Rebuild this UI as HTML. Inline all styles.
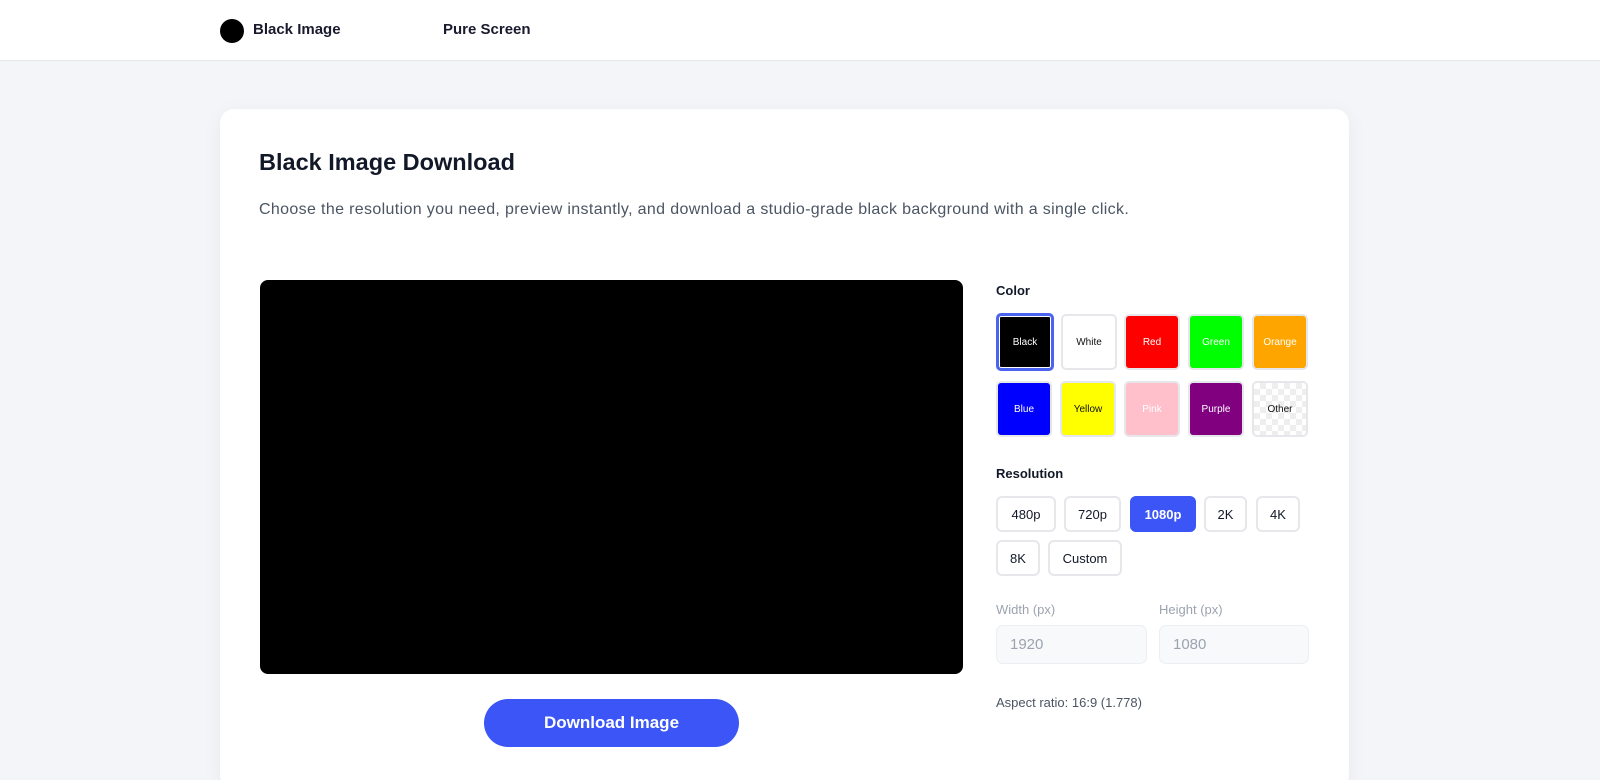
<!DOCTYPE html>
<html><head><meta charset="utf-8"><style>
*{box-sizing:border-box;margin:0;padding:0}
html,body{width:1600px;height:780px;overflow:hidden}
body{background:#f4f5f9;font-family:"Liberation Sans",sans-serif;color:#111827;position:relative}
.a{position:absolute}
.hdr{left:0;top:0;width:1600px;height:61px;background:#fff;border-bottom:1px solid #e5e7eb}
.card{left:220px;top:109px;width:1129px;height:680px;background:#fff;border-radius:14px;box-shadow:0 4px 20px rgba(0,0,0,0.05)}
.sw{width:56px;height:56px;border:2px solid #e5e7eb;border-radius:5px;font-size:10px;display:flex;align-items:center;justify-content:center;color:#fff}
.rb{height:36px;border:2px solid #e5e7eb;border-radius:6px;font-size:13px;display:flex;align-items:center;justify-content:center;color:#111827;background:#fff}
.lbl{font-size:13px;font-weight:bold;color:#111827}
.inp{height:39px;background:#f8f9fb;border:1px solid #eceef2;border-radius:7px;color:#9ca3af;font-size:15px;padding-left:13px;display:flex;align-items:center}
</style></head><body>
<div class="a hdr"></div>
<div class="a" style="left:220px;top:19px;width:24px;height:24px;border-radius:50%;background:#000"></div>
<div class="a" style="left:253px;top:21px;font-size:15px;font-weight:bold;color:#1a1a2e">Black Image</div>
<div class="a" style="left:443px;top:21px;font-size:15px;font-weight:bold;color:#1a1a2e">Pure Screen</div>
<div class="a card"></div>
<div class="a" style="left:259px;top:149px;font-size:23.5px;font-weight:bold;color:#111827">Black Image Download</div>
<div class="a" style="left:259px;top:201px;font-size:16px;letter-spacing:0.35px;color:#4b5563;white-space:nowrap">Choose the resolution you need, preview instantly, and download a studio-grade black background with a single click.</div>
<div class="a" style="left:260px;top:280px;width:703px;height:394px;background:#000;border-radius:8px"></div>
<div class="a" style="left:484px;top:699px;width:255px;height:48px;background:#3b55f6;border-radius:24px;color:#fff;font-size:17px;font-weight:bold;display:flex;align-items:center;justify-content:center">Download Image</div>

<div class="a lbl" style="left:996px;top:283px">Color</div>
<div class="a sw" style="left:996px;top:313px;width:58px;height:58px;border:3px solid #4a63f0;background:#000;box-shadow:inset 0 0 0 1px #fff">Black</div>
<div class="a sw" style="left:1061px;top:314px;background:#fff;color:#111">White</div>
<div class="a sw" style="left:1124px;top:314px;background:#f00">Red</div>
<div class="a sw" style="left:1188px;top:314px;background:#0f0">Green</div>
<div class="a sw" style="left:1252px;top:314px;background:#ffa500">Orange</div>
<div class="a sw" style="left:996px;top:381px;background:#00f">Blue</div>
<div class="a sw" style="left:1060px;top:381px;background:#ff0;color:#111">Yellow</div>
<div class="a sw" style="left:1124px;top:381px;background:#ffc0cb">Pink</div>
<div class="a sw" style="left:1188px;top:381px;background:#800080">Purple</div>
<div class="a sw" style="left:1252px;top:381px;color:#111;background-color:#fff;background-image:linear-gradient(45deg,#eee 25%,transparent 25%,transparent 75%,#eee 75%),linear-gradient(45deg,#eee 25%,transparent 25%,transparent 75%,#eee 75%);background-size:12px 12px;background-position:0 0,6px 6px">Other</div>

<div class="a lbl" style="left:996px;top:466px">Resolution</div>
<div class="a rb" style="left:996px;top:496px;width:60px">480p</div>
<div class="a rb" style="left:1064px;top:496px;width:57px">720p</div>
<div class="a rb" style="left:1130px;top:496px;width:66px;background:#3b55f6;border-color:#3b55f6;color:#fff;font-weight:bold">1080p</div>
<div class="a rb" style="left:1204px;top:496px;width:43px">2K</div>
<div class="a rb" style="left:1256px;top:496px;width:44px">4K</div>
<div class="a rb" style="left:996px;top:540px;width:44px">8K</div>
<div class="a rb" style="left:1048px;top:540px;width:74px">Custom</div>

<div class="a" style="left:996px;top:602px;font-size:13px;color:#9ca3af">Width (px)</div>
<div class="a" style="left:1159px;top:602px;font-size:13px;color:#9ca3af">Height (px)</div>
<div class="a inp" style="left:996px;top:625px;width:151px">1920</div>
<div class="a inp" style="left:1159px;top:625px;width:150px">1080</div>
<div class="a" style="left:996px;top:695px;font-size:13px;color:#4b5563">Aspect ratio: 16:9 (1.778)</div>
</body></html>
